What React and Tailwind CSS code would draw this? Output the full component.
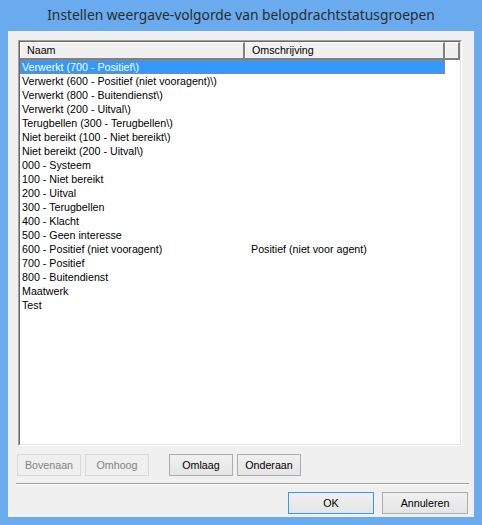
import React from 'react';

const rows = [
  ['Verwerkt (700 - Positief\\)', ''],
  ['Verwerkt (600 - Positief (niet vooragent)\\)', ''],
  ['Verwerkt (800 - Buitendienst\\)', ''],
  ['Verwerkt (200 - Uitval\\)', ''],
  ['Terugbellen (300 - Terugbellen\\)', ''],
  ['Niet bereikt (100 - Niet bereikt\\)', ''],
  ['Niet bereikt (200 - Uitval\\)', ''],
  ['000 - Systeem', ''],
  ['100 - Niet bereikt', ''],
  ['200 - Uitval', ''],
  ['300 - Terugbellen', ''],
  ['400 - Klacht', ''],
  ['500 - Geen interesse', ''],
  ['600 - Positief (niet vooragent)', 'Positief (niet voor agent)'],
  ['700 - Positief', ''],
  ['800 - Buitendienst', ''],
  ['Maatwerk', ''],
  ['Test', ''],
];

const Button = ({ children, disabled, primary, className = '' }) => (
  <button
    className={`h-[22px] flex items-center justify-center border ${
      disabled
        ? 'border-[#d9d9d9] bg-[#efefef] text-[#838383]'
        : primary
        ? 'border-[#3399ff] bg-gradient-to-b from-[#f0f0f0] to-[#e5e5e5] text-black'
        : 'border-[#acacac] bg-gradient-to-b from-[#f0f0f0] to-[#e5e5e5] text-black'
    } ${className}`}
  >
    {children}
  </button>
);

const HeaderCell = ({ children, className = '' }) => (
  <div className={`h-full border-t border-l border-t-white border-l-white border-r-2 border-r-[#808080] ${className}`}>
    {children}
  </div>
);

export default function App() {
  return (
    <div className="w-[482px] h-[525px] bg-[#6aabf0] flex flex-col overflow-hidden font-['Liberation_Sans',Arial,sans-serif] text-[10.7px]">
      {/* Title bar */}
      <div className="h-[31px] flex items-center justify-center text-[#2b2b2b] text-[13.8px] font-['Noto_Sans',sans-serif] pb-[1px]">
        Instellen weergave-volgorde van belopdrachtstatusgroepen
      </div>

      {/* Client area */}
      <div className="mx-[8px] h-[486px] bg-[#f0f0f0] flex flex-col">
        {/* List view */}
        <div className="ml-[10px] mt-[9px] w-[444px] h-[406px] border border-t-[#a0a0a0] border-l-[#a0a0a0] border-b-white border-r-white">
          <div className="w-full h-full border border-t-[#696969] border-l-[#696969] border-b-[#e3e3e3] border-r-[#e3e3e3] bg-white flex flex-col">
            {/* Header */}
            <div className="h-[18px] flex bg-[#f0f0f0] border-b-2 border-b-[#808080] leading-[15px]">
              <HeaderCell className="w-[225px] pl-[6px]">Naam</HeaderCell>
              <HeaderCell className="w-[200px] pl-[6px]">Omschrijving</HeaderCell>
              <HeaderCell className="flex-1" />
            </div>
            {/* Rows */}
            <div className="flex flex-col">
              {rows.map(([name, desc], i) => (
                <div
                  key={i}
                  className={`h-[14px] w-[425px] flex leading-[12px] ${
                    i === 0
                      ? 'bg-[#3399ff] text-white border border-dotted border-[#c8783c]'
                      : 'text-black border border-transparent'
                  }`}
                >
                  <div className="w-[224px] pl-[1px] whitespace-nowrap">{name}</div>
                  <div className="pl-[6px] whitespace-nowrap">{desc}</div>
                </div>
              ))}
            </div>
          </div>
        </div>

        {/* Move buttons */}
        <div className="mt-[8px] ml-[9px] flex">
          <Button disabled className="w-[64px]">Bovenaan</Button>
          <Button disabled className="w-[64px] ml-[4px]">Omhoog</Button>
          <Button className="w-[64px] ml-[20px]">Omlaag</Button>
          <Button className="w-[64px] ml-[4px]">Onderaan</Button>
        </div>

        {/* Separator */}
        <div className="mt-[7px] ml-[8px] w-[453px] border-t border-t-[#a0a0a0] border-b border-b-white" />

        {/* Dialog buttons */}
        <div className="mt-[7px] ml-[280px] flex">
          <Button primary className="w-[86px]">OK</Button>
          <Button className="w-[86px] ml-[8px]">Annuleren</Button>
        </div>
      </div>
    </div>
  );
}
